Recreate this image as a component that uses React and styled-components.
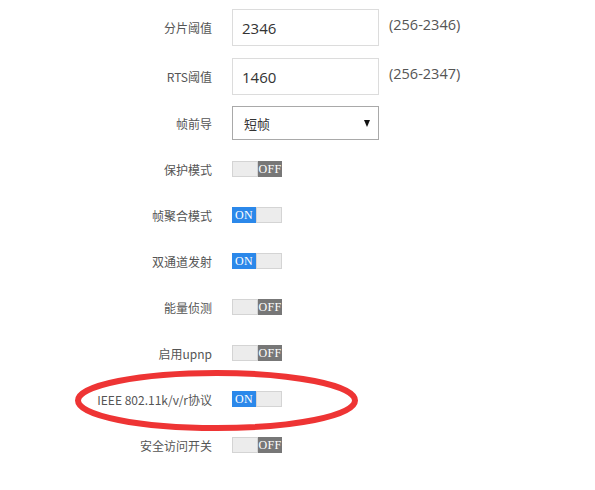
import styled, { createGlobalStyle } from 'styled-components';

const GlobalStyle = createGlobalStyle`
    body {
        margin: 0;
        background: #fff;
        font-family: "Noto Sans", "Noto Sans CJK SC", sans-serif;
    }
`;

const Page = styled.div`
    position: relative;
    width: 595px;
    height: 490px;
    padding-top: 9px;
    box-sizing: border-box;
    overflow: hidden;
`;

const Row = styled.div`
    display: grid;
    grid-template-columns: 212px auto 1fr;
    column-gap: 20px;
    align-items: center;
    height: ${({ h }) => h}px;
    margin-bottom: ${({ mb }) => mb || 0}px;
`;

const Label = styled.div`
    text-align: right;
    font-size: 12px;
    color: #555;
    font-family: "Noto Sans CJK SC", sans-serif;
    white-space: nowrap;
`;

const Input = styled.div`
    width: 147px;
    height: 37px;
    box-sizing: border-box;
    border: 1px solid #dcdcdc;
    padding-left: 9px;
    display: flex;
    align-items: center;
    font-size: 15px;
    color: #333;
    font-family: "Open Sans", sans-serif;
`;

const Range = styled.div`
    align-self: start;
    margin-left: -10px;
    padding-top: 6px;
    font-size: 14.5px;
    color: #555;
    font-family: "Open Sans", sans-serif;
`;

const Select = styled.div`
    width: 147px;
    height: 34px;
    box-sizing: border-box;
    border: 1px solid #a9a9a9;
    padding: 0 8px 0 11px;
    display: flex;
    align-items: center;
    justify-content: space-between;
    font-size: 13px;
    color: #333;
    font-family: "Noto Sans CJK SC", sans-serif;

    i {
        width: 0;
        height: 0;
        border-left: 3px solid transparent;
        border-right: 3px solid transparent;
        border-top: 7px solid #111;
    }
`;

const Toggle = styled.div`
    display: flex;
    width: 50px;
    height: 16px;
    box-sizing: border-box;
`;

const Half = styled.div`
    flex: 1;
    display: flex;
    align-items: center;
    justify-content: center;
    font-family: "Liberation Serif", "DejaVu Serif", serif;
    font-size: 12px;
    letter-spacing: 0.3px;
    color: #fff;
    background: ${({ tone }) =>
        tone === 'on' ? '#2b88ea' : tone === 'off' ? '#777' : '#ececec'};
    border: ${({ tone }) => (tone ? 'none' : '1px solid #d4d4d4')};
`;

const Ring = styled.svg`
    position: absolute;
    left: 0;
    top: 0;
    pointer-events: none;
`;

const Switch = ({ on }) => (
    <Toggle>
        {on ? <Half tone="on">ON</Half> : <Half />}
        {on ? <Half /> : <Half tone="off">OFF</Half>}
    </Toggle>
);

const toggles = [
    ['保护模式', false],
    ['帧聚合模式', true],
    ['双通道发射', true],
    ['能量侦测', false],
    ['启用upnp', false],
    ['IEEE 802.11k/v/r协议', true],
    ['安全访问开关', false],
];

const App = () => (
    <Page>
        <GlobalStyle />
        <Row h={37} mb={12}>
            <Label>分片阈值</Label>
            <Input>2346</Input>
            <Range>(256-2346)</Range>
        </Row>
        <Row h={37} mb={11}>
            <Label>RTS阈值</Label>
            <Input>1460</Input>
            <Range>(256-2347)</Range>
        </Row>
        <Row h={34} mb={6}>
            <Label>帧前导</Label>
            <Select>短帧<i /></Select>
        </Row>
        {toggles.map(([name, on]) => (
            <Row key={name} h={46}>
                <Label>{name}</Label>
                <Switch on={on} />
            </Row>
        ))}
        <Ring width="595" height="490">
            <ellipse cx="216.5" cy="400.5" rx="138.5" ry="27.5" fill="none" stroke="#ee3434" strokeWidth="6" />
        </Ring>
    </Page>
);

export default App;
